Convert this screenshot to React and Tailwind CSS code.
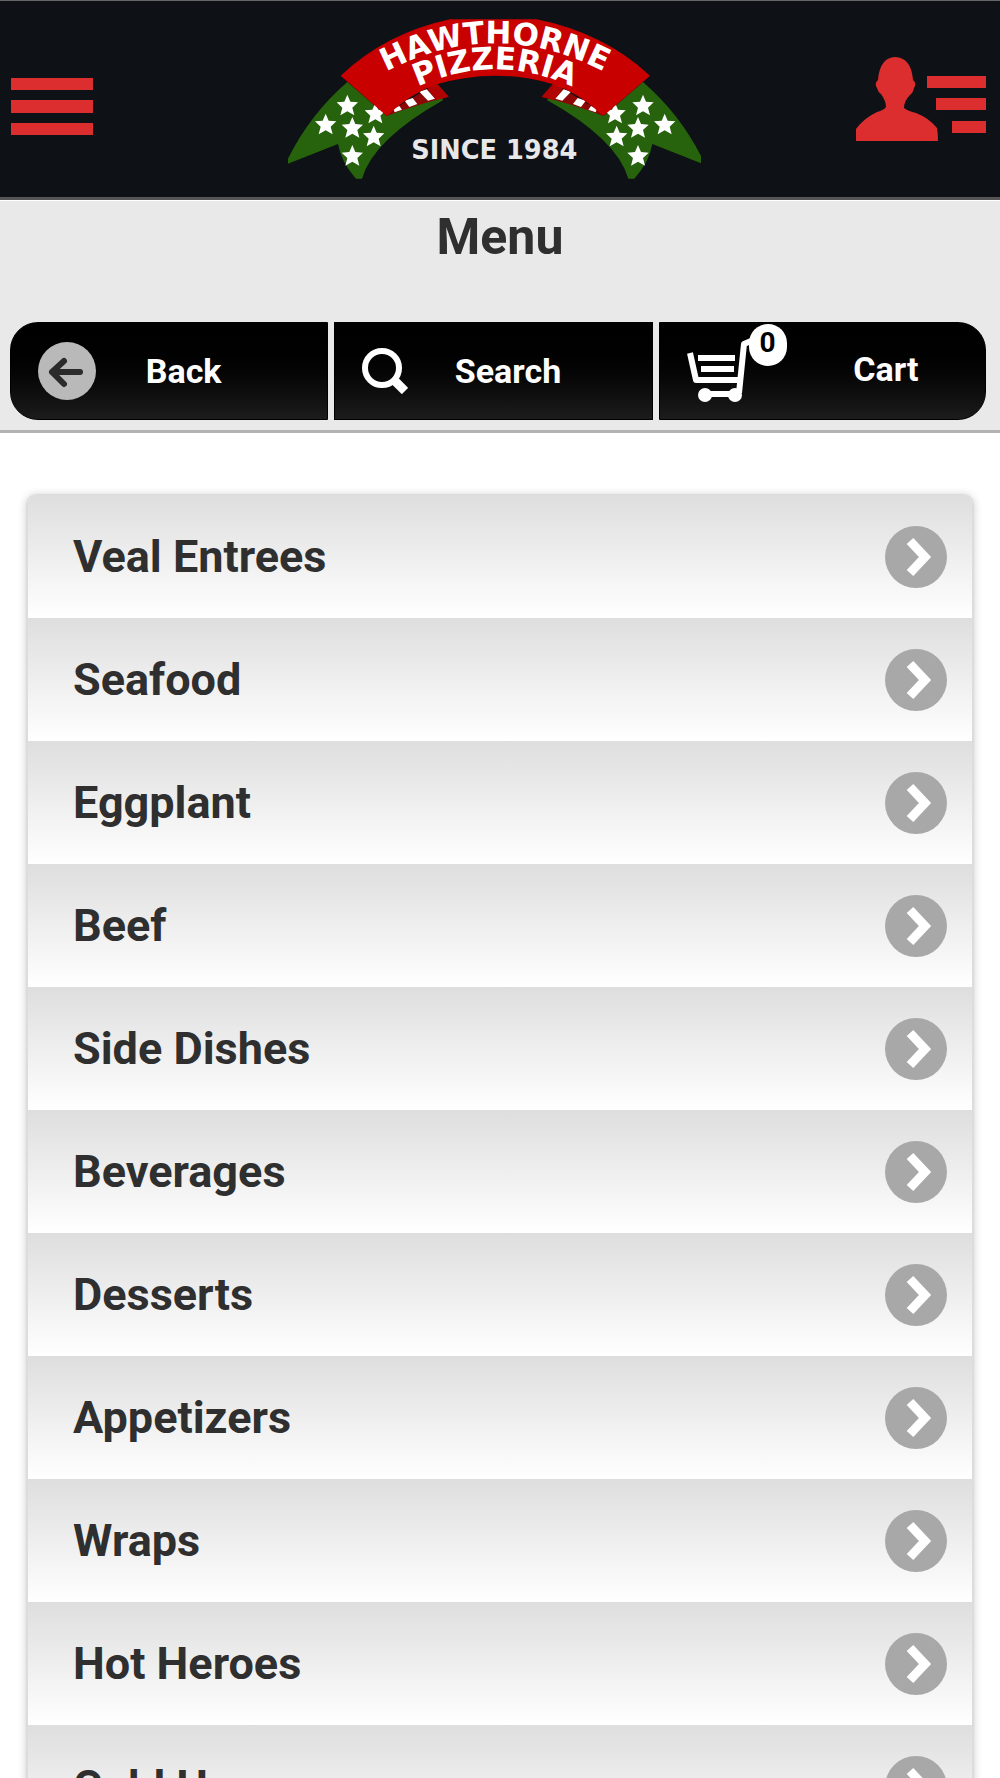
const categories = [
  { id: 1, name: 'Veal Entrees' },
  { id: 2, name: 'Seafood' },
  { id: 3, name: 'Eggplant' },
  { id: 4, name: 'Beef' },
  { id: 5, name: 'Side Dishes' },
  { id: 6, name: 'Beverages' },
  { id: 7, name: 'Desserts' },
  { id: 8, name: 'Appetizers' },
  { id: 9, name: 'Wraps' },
  { id: 10, name: 'Hot Heroes' },
  { id: 11, name: 'Cold Heroes' },
];

const STAR = 'M0 -32 L9 -11 L32 -9 L15 7 L21 30 L0 18 L-21 30 L-15 7 L-32 -9 L-9 -11 Z';

const leftStars = [
  [232, 318],
  [167, 375],
  [247, 385],
  [316, 342],
  [311, 411],
  [247, 469],
];

// One green tail of the ribbon, mirrored for the right side
const RibbonTail = () => (
  <g>
    <path d="M232 248 Q120 345 54 478 L54 493 L204 434 Q214 490 258 538 L276 538 Q310 420 520 302 L490 262 L350 350 Z" fill="#26630c" />
    {leftStars.map(([x, y]) => (
      <path key={`${x}-${y}`} d={STAR} transform={`translate(${x} ${y})`} fill="#fff" />
    ))}
    <path d="M350 350 L370 330 L500 252 L536 292 Q440 315 350 350 Z" fill="#8d0505" />
    <path d="M500 252 L536 292 L500 303 L470 262 Z" fill="#b00303" />
    <path d="M448 277 L470 270 L495 298 L474 304 Z" fill="#fff" />
    <path d="M404 304 L428 296 L442 314 L418 323 Z" fill="#fff" />
    <path d="M370 328 L388 320 L396 331 L374 339 Z" fill="#fff" />
  </g>
);

const Logo = () => (
  <svg viewBox="54 60 1239 478" className="h-40 w-[413px]" role="img" aria-label="Hawthorne Pizzeria">
    <defs>
      <path id="arc-top" d="M300 244 Q675 20 1050 244" />
      <path id="arc-bottom" d="M400 284 Q675 136 950 284" />
    </defs>
    <RibbonTail />
    <g transform="translate(1351 0) scale(-1 1)">
      <RibbonTail />
    </g>
    <path d="M212 229 Q350 100 540 60 L800 60 Q1000 100 1140 229 L1000 350 Q925 280 850 255 Q675 203 500 255 Q425 280 350 350 Z" fill="#c80000" />
    <g fill="#fff" className="font-['DejaVu_Sans'] font-bold" textAnchor="middle">
      <text fontSize="93">
        <textPath href="#arc-top" startOffset="50%">HAWTHORNE</textPath>
      </text>
      <text fontSize="93">
        <textPath href="#arc-bottom" startOffset="50%">PIZZERIA</textPath>
      </text>
      <text x="673" y="478" fontSize="77" fill="#e8e8e8">SINCE 1984</text>
    </g>
  </svg>
);

const MenuIcon = () => (
  <svg viewBox="0 0 82 57" className="h-[57px] w-[82px]" fill="#dc2e2e" aria-hidden="true">
    <rect width="82" height="12" />
    <rect y="22" width="82" height="13" />
    <rect y="45" width="82" height="12" />
  </svg>
);

const AccountIcon = () => (
  <svg viewBox="0 0 130 84" className="h-[84px] w-[130px]" fill="#dc2e2e" aria-hidden="true">
    <path d="M39 0 C50 0 56 9 57 23 Q61 26 58 31 Q57 36 54 38 Q48 44 48 51 Q52 54 60 56 Q73 61 81 71 Q82 76 82 84 H0 V72 Q8 61 21 55 Q28 53 30 50 Q30 44 25 37 Q22 35 21 31 Q18 26 22 23 C23 9 29 0 39 0 Z" />
    <rect x="71" y="19" width="59" height="12" />
    <rect x="80" y="41" width="50" height="12" />
    <rect x="96" y="64" width="34" height="12" />
  </svg>
);

const BackIcon = () => (
  <svg viewBox="0 0 58 58" className="size-[58px]" aria-hidden="true">
    <circle cx="29" cy="29" r="29" fill="#b9b9b9" />
    <path d="M42 30 H14 M26 19 L14 30 L26 42" fill="none" stroke="#2b2b2b" strokeWidth="6" strokeLinecap="round" strokeLinejoin="round" />
  </svg>
);

const SearchIcon = () => (
  <svg viewBox="0 0 46 46" className="size-[46px]" fill="none" stroke="#fff" aria-hidden="true">
    <circle cx="20" cy="20" r="17" strokeWidth="6" />
    <path d="M32 32 L43 43" strokeWidth="9" />
  </svg>
);

const CartIcon = () => (
  <svg viewBox="0 0 66 66" className="size-[66px]" fill="none" stroke="#fff" strokeWidth="6" aria-hidden="true">
    <path d="M3 15 L9 42 H52 M64 3 L57 6 L52 55" strokeLinejoin="round" />
    <path d="M11 20 H48 M14 31 H47" />
    <path d="M18 56 H48" />
    <circle cx="18" cy="57" r="7" fill="#fff" stroke="none" />
    <circle cx="48" cy="57" r="7" fill="#fff" stroke="none" />
  </svg>
);

const ChevronIcon = () => (
  <svg viewBox="0 0 62 62" className="size-[62px] shrink-0" aria-hidden="true">
    <circle cx="31" cy="31" r="31" fill="#a8a8a8" />
    <path d="M25 15 L40 31 L25 47" fill="none" stroke="#fff" strokeWidth="9" />
  </svg>
);

const toolbarButton =
  'flex h-[98px] items-center border border-black bg-linear-to-b from-black to-[#1c1c1c] pl-[27px] text-[34px] font-bold text-white cursor-pointer';

const App = () => {
  const cartCount = 0;

  return (
    <div className="h-screen overflow-y-auto bg-white font-['Roboto',sans-serif] text-[#2f2f2f] [scrollbar-width:none]">
      <header className="grid h-[200px] grid-cols-[1fr_auto_1fr] items-center border-t border-b-3 border-t-[#666] border-b-[#555] bg-[#0e1116] pr-3.5 pl-[11px]">
        <button type="button" aria-label="Open menu" className="mt-3.5 cursor-pointer justify-self-start">
          <MenuIcon />
        </button>
        <div className="pr-2">
          <Logo />
        </div>
        <button type="button" aria-label="Account" className="cursor-pointer justify-self-end">
          <AccountIcon />
        </button>
      </header>

      <section className="border-t border-b-3 border-t-white border-b-[#b3b3b3] bg-[#e9e9e9] px-2.5 pb-[10px]">
        <h1 className="pt-1 pb-[53px] text-center text-[50px] leading-16 font-bold">Menu</h1>
        <nav className="grid grid-cols-[318fr_318fr_327fr] gap-1.5 pr-1">
          <button type="button" className={`${toolbarButton} rounded-l-[28px]`}>
            <span className="w-[58px]"><BackIcon /></span>
            <span className="flex-1 pr-14">Back</span>
          </button>
          <button type="button" className={toolbarButton}>
            <span className="w-[58px]"><SearchIcon /></span>
            <span className="flex-1 pr-14">Search</span>
          </button>
          <button type="button" className={`${toolbarButton} rounded-r-[28px]`}>
            <span className="relative w-[100px]">
              <CartIcon />
              <span className="absolute -top-3.5 right-0 flex h-[42px] w-[38px] items-center justify-center rounded-full bg-white pb-1 text-[28px] leading-8 text-black">
                {cartCount}
              </span>
            </span>
            <span className="flex-1 pb-1">Cart</span>
          </button>
        </nav>
      </section>

      <main className="px-[26px] py-[61px]">
        <ul className="overflow-hidden rounded-[10px] border-x-2 border-t border-[#dcdcdc] shadow-[0_1px_8px_rgba(0,0,0,0.2)]">
          {categories.map((category) => (
            <li key={category.id}>
              <a
                href={`#category-${category.id}`}
                className="flex h-[123px] items-center justify-between bg-linear-to-b from-[#dedede] to-white pr-[25px] pl-[45px] text-[45px] font-bold"
              >
                {category.name}
                <ChevronIcon />
              </a>
            </li>
          ))}
        </ul>
      </main>
    </div>
  );
};

export default App;
